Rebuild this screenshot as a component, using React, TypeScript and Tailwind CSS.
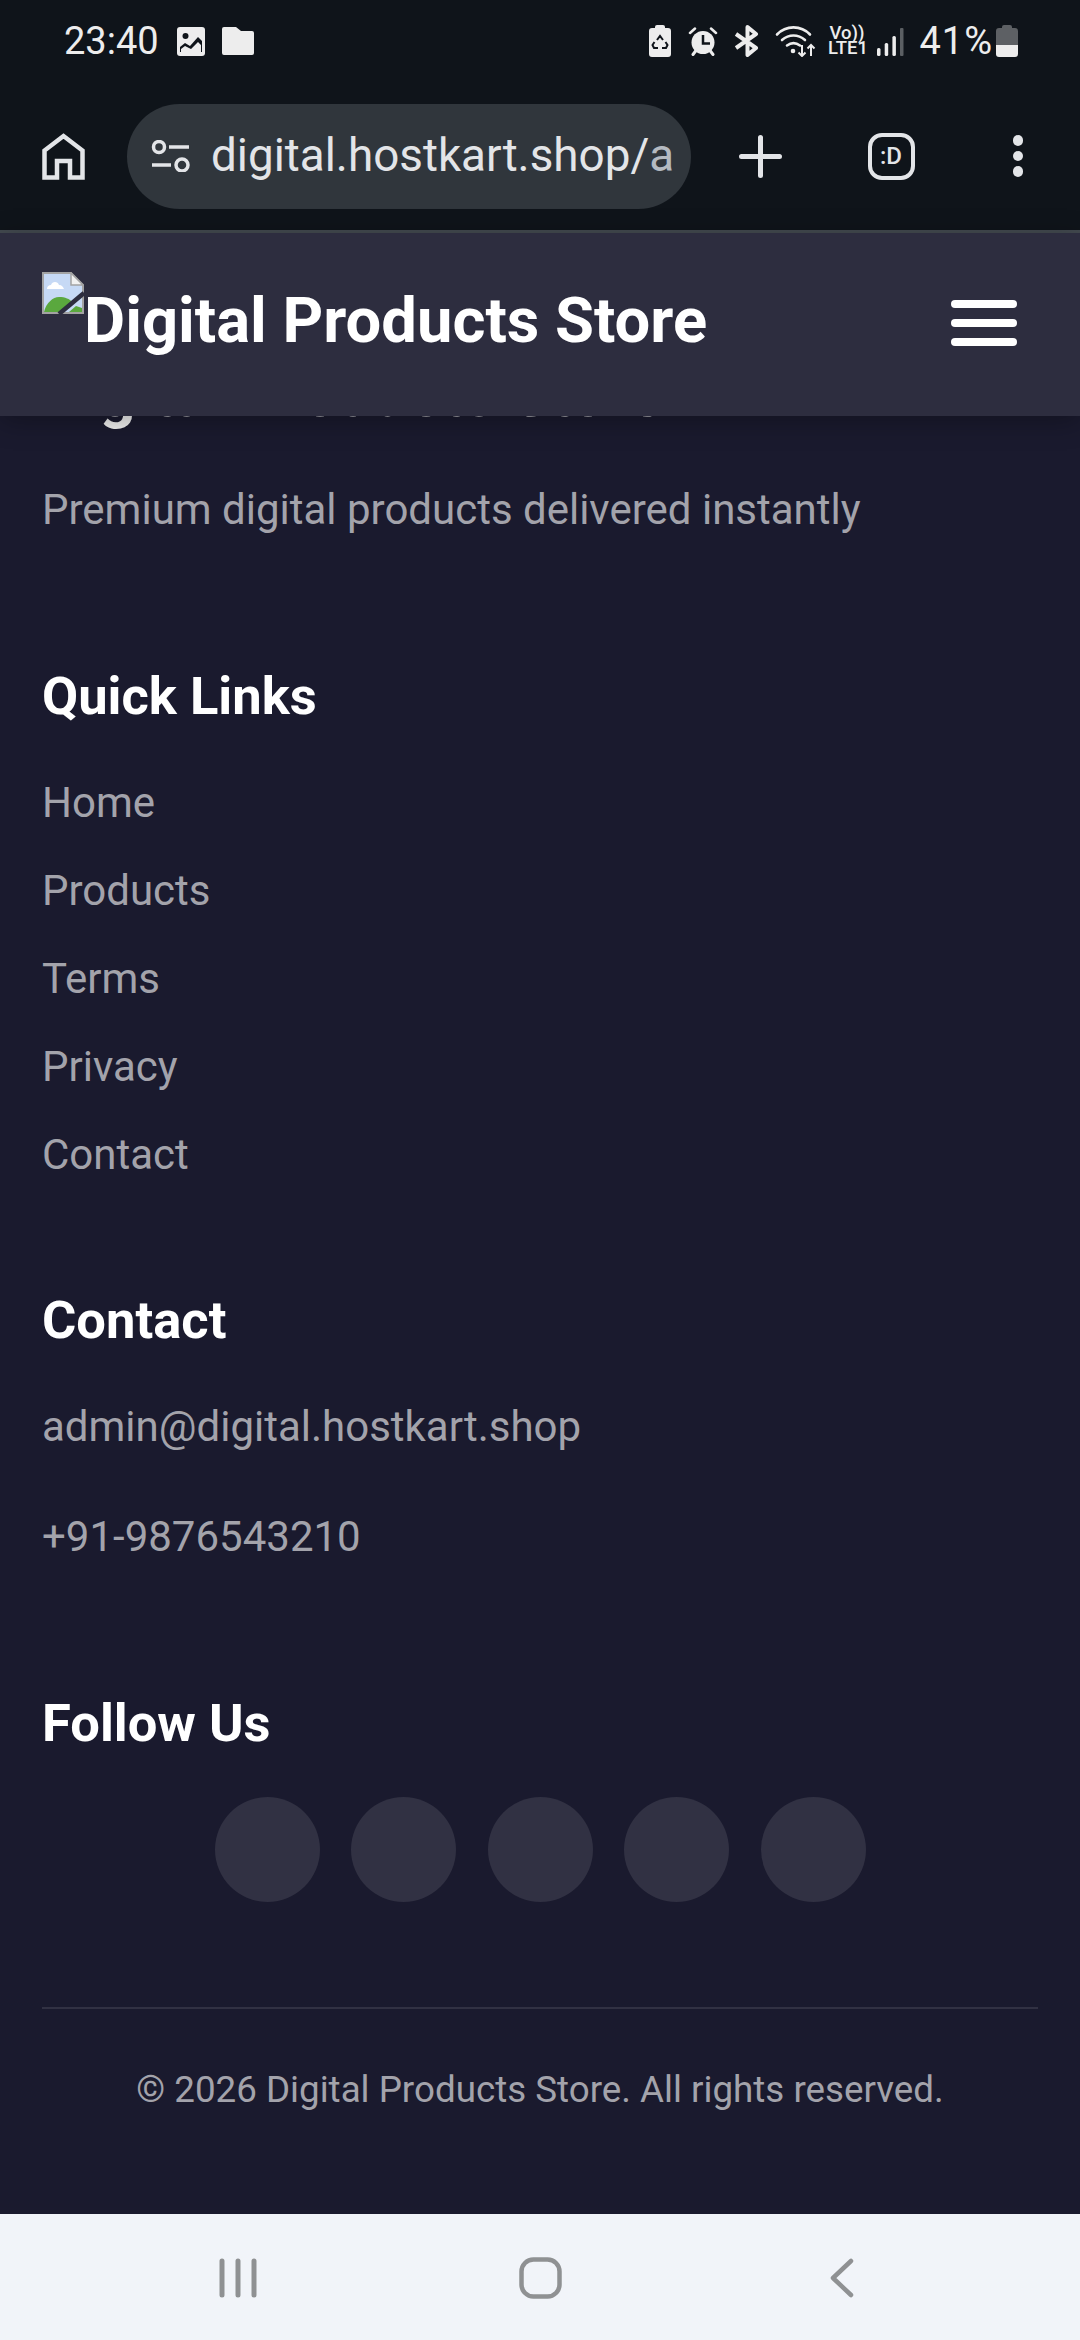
const font = { fontFamily: "Roboto, sans-serif" };

function StatusIcons() {
  return (
    <div className="flex items-center">
      <svg width="22" height="32" viewBox="0 0 22 32" className="mr-[17px]">
        <path d="M6 2a2 2 0 0 1 2-2h6a2 2 0 0 1 2 2v1h3a3 3 0 0 1 3 3v23a3 3 0 0 1-3 3H3a3 3 0 0 1-3-3V6a3 3 0 0 1 3-3h3z" fill="#ededed" />
        <path d="M8 15l3-4 3 4M16.500 17l2 3-1.500 3H13M9 23H5l-1.500-3 2-3" fill="none" stroke="#0f141a" strokeWidth="2" />
      </svg>
      <svg width="30" height="29" viewBox="0 0 30 29" className="mr-[15px]">
        <path d="M2 6l5-4.500M28 6l-5-4.500" stroke="#ededed" strokeWidth="2.500" strokeLinecap="round" />
        <circle cx="15" cy="15.500" r="11.500" fill="#ededed" />
        <path d="M5 27.500l3-4M25 27.500l-3-4" stroke="#ededed" strokeWidth="3" strokeLinecap="round" />
        <path d="M15 8v8.500h7" fill="none" stroke="#0f141a" strokeWidth="2.500" />
      </svg>
      <svg width="28" height="32" viewBox="0 0 28 32" className="mr-[14px]">
        <path d="M3 9l20 14-8.500 7V2L23 9 3 23" fill="none" stroke="#ededed" strokeWidth="4" strokeLinejoin="round" />
      </svg>
      <svg width="41" height="31" viewBox="0 0 41 31" className="mr-[12px]">
        <path d="M2 8.500C11-1 26-1 35 8.500M7 14c7-6 16-6 23 0M12 19.500c4-3 9-3 13 0" fill="none" stroke="#ededed" strokeWidth="2.600" strokeLinecap="round" />
        <circle cx="18" cy="25" r="2.300" fill="#ededed" />
        <path d="M27 19v11m-3.500-3.500L27 30l3.500-3.500M36 30V19m-3.500 3.500L36 19l3.500 3.500" fill="none" stroke="#ededed" strokeWidth="2" />
      </svg>
      <div className="flex flex-col items-center w-[39px] mr-[10px] text-[#ededed] font-medium text-[18.500px] leading-[15px]">
        <span className="-translate-x-[1px]">Vo))</span>
        <span className="whitespace-nowrap">LTE1</span>
      </div>
      <svg width="27" height="29" viewBox="0 0 27 29" className="mr-[15px]">
        <rect x="0" y="21" width="3.500" height="8" rx="1.500" fill="#ededed" />
        <rect x="7.700" y="16" width="3.500" height="13" rx="1.500" fill="#ededed" />
        <rect x="15.400" y="9" width="3.500" height="20" rx="1.500" fill="#ededed" />
        <rect x="23" y="1" width="3.500" height="28" rx="1" fill="#5b5f63" />
      </svg>
      <span className="text-[38px] leading-none text-[#ededed] mr-[3px] tracking-[1px]">41%</span>
      <svg width="22" height="32" viewBox="0 0 22 32">
        <path d="M6 2a2 2 0 0 1 2-2h6a2 2 0 0 1 2 2v1h3a3 3 0 0 1 3 3v14H0V6a3 3 0 0 1 3-3h3z" fill="#5d6064" />
        <path d="M0 20h22v9a3 3 0 0 1-3 3H3a3 3 0 0 1-3-3z" fill="#ededed" />
      </svg>
    </div>
  );
}

function ChromeBar() {
  return (
    <div className="h-[230px] bg-[#0f141a] flex flex-col shrink-0">
      <div className="h-[82px] pl-[64px] pr-[62px] flex items-center justify-between">
        <div className="flex items-center">
          <span className="text-[38px] leading-none text-[#ededed] mr-[18px]">23:40</span>
          <svg width="28" height="29" viewBox="0 0 28 29" className="mr-[17px]">
            <rect width="28" height="29" rx="3" fill="#ededed" />
            <circle cx="8.500" cy="9" r="3" fill="#0f141a" />
            <path d="M3 25v-5l5-4 5 3 8-9 4 4v11z" fill="#0f141a" />
            <path d="M4 25v-3l4-3 6 3 7-7 3 3v7z" fill="#ededed" />
          </svg>
          <svg width="32" height="28" viewBox="0 0 32 28">
            <path d="M2 0h12l5 4h11a2 2 0 0 1 2 2v20a2 2 0 0 1-2 2H2a2 2 0 0 1-2-2V2a2 2 0 0 1 2-2z" fill="#ededed" />
          </svg>
        </div>
        <StatusIcons />
      </div>
      <div className="h-[148px] flex items-center">
        <div className="w-[127px] flex justify-center">
          <svg width="43" height="47" viewBox="0 0 43 47" fill="none" stroke="#e3e5e8" strokeWidth="4.500">
            <path d="M2.500 44.500V17.500L21.500 3l19 14.500v27H28V28H15v16.500z" />
          </svg>
        </div>
        <div className="w-[564px] h-[105px] rounded-full bg-[#30363c] flex items-center pl-[24px] overflow-hidden">
          <svg width="39" height="32" viewBox="0 0 39 32" fill="none" stroke="#e3e5e8" strokeWidth="3.500" className="shrink-0 mr-[21px]">
            <circle cx="8" cy="7" r="5.500" />
            <path d="M18 7h20M1 25h19" />
            <circle cx="31" cy="25" r="6" />
          </svg>
          <span className="text-[45.800px] leading-none text-[#e3e5e8] whitespace-nowrap">digital.hostkart.shop/<span className="text-[#b4bac1]">a</span></span>
        </div>
        <div className="w-[138px] flex justify-center">
          <svg width="43" height="43" viewBox="0 0 43 43" stroke="#e3e5e8" strokeWidth="5" strokeLinecap="round"><path d="M21.500 2.500v38M2.500 21.500h38" /></svg>
        </div>
        <div className="w-[124px] flex justify-center">
          <div className="w-[47px] h-[47px] rounded-[14px] border-[4px] border-[#e3e5e8] flex items-center justify-center text-[#e3e5e8] text-[24px] font-medium leading-none">:D</div>
        </div>
        <div className="flex-1 flex flex-col items-center gap-[5px] pl-[3px]">
          <span className="w-[10.500px] h-[10.500px] rounded-full bg-[#e3e5e8]" />
          <span className="w-[10.500px] h-[10.500px] rounded-full bg-[#e3e5e8]" />
          <span className="w-[10.500px] h-[10.500px] rounded-full bg-[#e3e5e8]" />
        </div>
      </div>
    </div>
  );
}

function BrokenImage() {
  return (
    <svg width="42" height="42" viewBox="0 0 42 42" className="shrink-0 self-start">
      <path d="M1 1h28l12 12v28H1z" fill="#c6d9f5" stroke="#a3a3a3" strokeWidth="2" />
      <path d="M29 1v12h12z" fill="#f1f1f1" stroke="#a3a3a3" strokeWidth="1.500" />
      <path d="M5 17c0-3 2-4 4-4 1-4 7-4 8 0 3 0 4 2 5 4z" fill="#fff" />
      <path d="M2 40c2-9 9-15 15-15s11 2 13 5L17 40z" fill="#5aa83e" />
      <path d="M27 40l7-6 6 2v4z" fill="#5aa83e" />
      <path d="M17 42L42 21" stroke="#2d2d3f" strokeWidth="4.500" />
    </svg>
  );
}

const links = ["Home", "Products", "Terms", "Privacy", "Contact"];

export default function App() {
  return (
    <div className="w-[1080px] h-[2340px] flex flex-col overflow-hidden bg-[#1a1a2e]" style={font}>
      <ChromeBar />
      <div className="h-[3px] bg-[#434a50] shrink-0" />
      <header className="relative z-10 h-[183px] bg-[#2d2d3f] pl-[42px] pr-[63px] flex items-start justify-between shrink-0 shadow-[0_5px_26px_rgba(0,0,0,0.3)]">
        <div className="flex items-start pt-[39px]">
          <BrokenImage />
          <span className="text-[63.300px] leading-[74px] font-bold text-white whitespace-nowrap mt-[11px]">Digital Products Store</span>
        </div>
        <div className="flex flex-col gap-[11px] mt-[67px]">
          <span className="block w-[66px] h-[8px] rounded-full bg-white" />
          <span className="block w-[66px] h-[8px] rounded-full bg-white" />
          <span className="block w-[66px] h-[8px] rounded-full bg-white" />
        </div>
      </header>
      <main className="flex-1 overflow-hidden px-[42px] min-h-0">
        <h3 className="-mt-[58px] text-[63px] leading-[74px] font-bold text-[#f0f0f0] whitespace-nowrap">Digital Products Store</h3>
        <p className="mt-[46px] text-[42px] leading-[63px] text-[#a3a3ab]">Premium digital products delivered instantly</p>

        <h4 className="mt-[125px] text-[52.500px] leading-[61px] font-bold text-white">Quick Links</h4>
        <ul className="mt-[44px] flex flex-col gap-[25px]">
          {links.map((l) => (
            <li key={l} className="text-[42px] leading-[63px] text-[#a3a3ab]">{l}</li>
          ))}
        </ul>

        <h4 className="mt-[104px] text-[52.500px] leading-[61px] font-bold text-white">Contact</h4>
        <p className="mt-[44px] text-[42px] leading-[63px] text-[#a3a3ab]">admin@digital.hostkart.shop</p>
        <p className="mt-[47px] text-[42px] leading-[63px] text-[#a3a3ab]">+91-9876543210</p>

        <h4 className="mt-[125px] text-[52.500px] leading-[61px] font-bold text-white">Follow Us</h4>
        <div className="mt-[43px] flex justify-center gap-[31.500px]">
          {[0, 1, 2, 3, 4].map((i) => (
            <span key={i} className="w-[105px] h-[105px] rounded-full bg-[#313143]" />
          ))}
        </div>

        <div className="mt-[105px] border-t-2 border-[#313143] pt-[53px]">
          <p className="text-center text-[36.750px] leading-[56px] text-[#a3a3ab] whitespace-nowrap">© 2026 Digital Products Store. All rights reserved.</p>
        </div>
      </main>
      <nav className="h-[126px] bg-[#f1f4f9] shrink-0 flex items-center justify-center pt-[1px]">
        <div className="flex items-center w-[664px] justify-between">
          <div className="w-[60px] flex justify-center">
            <svg width="38" height="40" viewBox="0 0 38 40" stroke="#8f9193" strokeWidth="5" strokeLinecap="round">
              <path d="M3 3v34M19 3v34M35 3v34" />
            </svg>
          </div>
          <div className="w-[60px] flex justify-center">
            <svg width="43" height="42" viewBox="0 0 43 42" fill="none" stroke="#8f9193" strokeWidth="4.500">
              <rect x="2.500" y="2.500" width="38" height="37" rx="12" />
            </svg>
          </div>
          <div className="w-[60px] flex justify-center">
            <svg width="24" height="40" viewBox="0 0 24 40" fill="none" stroke="#8f9193" strokeWidth="4.500" strokeLinecap="round" strokeLinejoin="round">
              <path d="M21 3L3 20l18 17" />
            </svg>
          </div>
        </div>
      </nav>
    </div>
  );
}
